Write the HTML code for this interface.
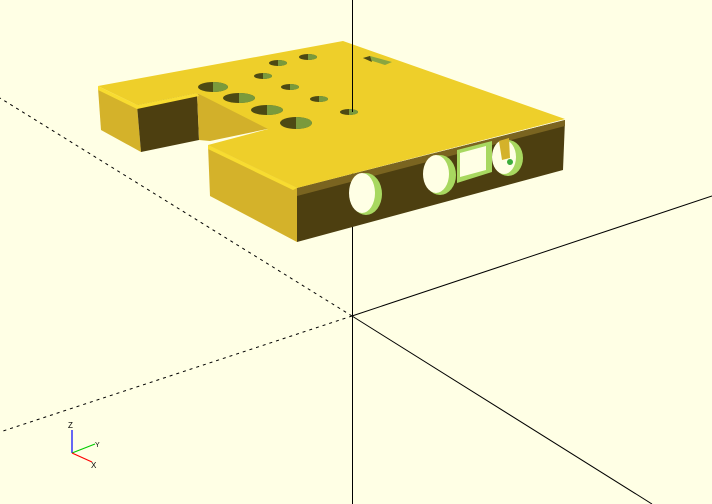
<!DOCTYPE html>
<html><head><meta charset="utf-8"><style>html,body{margin:0;padding:0;background:#ffffe5;overflow:hidden}svg{display:block}</style></head><body>
<svg width="712" height="504" viewBox="0 0 712 504" xmlns="http://www.w3.org/2000/svg">
<rect width="712" height="504" fill="#ffffe5"/>
<!-- axes -->
<line x1="352" y1="316" x2="0" y2="98" stroke="#000" stroke-width="1" stroke-dasharray="3,4"/>
<line x1="352" y1="316" x2="0" y2="432" stroke="#000" stroke-width="1" stroke-dasharray="3,4"/>
<line x1="352" y1="316" x2="712" y2="196" stroke="#000" stroke-width="1"/>
<line x1="352" y1="316" x2="652" y2="504" stroke="#000" stroke-width="1"/>
<line x1="352.5" y1="0" x2="352.5" y2="504" stroke="#000" stroke-width="1"/>
<!-- object -->
<polygon points="98,88 137,105 141,152 101,130" fill="#d4b22a"/>
<polygon points="137,105 197,93 199,140 141,152" fill="#4d3f10"/>
<polygon points="197,93 272,128 210,141 199,140" fill="#d2b02a"/>
<polygon points="208,145 297,188 297,242 210,196" fill="#d4b22a"/>
<polygon points="297,188 565,120 563,170 297,242" fill="#4d3f10"/>
<polygon points="297,188 565,120 565,126 297,196" fill="#7a6420"/>
<polygon points="98,86 343,41 565,119 297,188 208,145 268,129 197,93 137,105" fill="#eecf2a"/>
<polygon points="98,86 137,105 197,93 199,96 137,109 98,90" fill="#f8dc30"/>
<polygon points="208,145 297,188 293,190 208,149" fill="#f8dc30"/>
<!-- top holes -->
<g>
<ellipse cx="213" cy="87" rx="15" ry="5" fill="#4d4a14"/><path d="M213,82 a15,5 0 0 1 0,10z" fill="#7a9a3c"/>
<ellipse cx="239" cy="98" rx="16" ry="5" fill="#4d4a14"/><path d="M239,93 a16,5 0 0 1 0,10z" fill="#7a9a3c"/>
<ellipse cx="267" cy="110" rx="16" ry="5" fill="#4d4a14"/><path d="M267,105 a16,5 0 0 1 0,10z" fill="#7a9a3c"/>
<ellipse cx="296" cy="123" rx="16" ry="6" fill="#4d4a14"/><path d="M296,117 a16,6 0 0 1 0,12z" fill="#7a9a3c"/>
<ellipse cx="263" cy="76" rx="9" ry="3" fill="#4d4a14"/><path d="M263,73 a9,3 0 0 1 0,6z" fill="#7a9a3c"/>
<ellipse cx="278" cy="63" rx="9" ry="3" fill="#4d4a14"/><path d="M278,60 a9,3 0 0 1 0,6z" fill="#7a9a3c"/>
<ellipse cx="308" cy="57" rx="9" ry="3" fill="#4d4a14"/><path d="M308,54 a9,3 0 0 1 0,6z" fill="#7a9a3c"/>
<ellipse cx="290" cy="87" rx="9" ry="3" fill="#4d4a14"/><path d="M290,84 a9,3 0 0 1 0,6z" fill="#7a9a3c"/>
<ellipse cx="319" cy="99" rx="9" ry="3" fill="#4d4a14"/><path d="M319,96 a9,3 0 0 1 0,6z" fill="#7a9a3c"/>
<ellipse cx="349" cy="112" rx="9" ry="3" fill="#4d4a14"/><path d="M349,109 a9,3 0 0 1 0,6z" fill="#7a9a3c"/>
<polygon points="363,58 370,56 392,62 385,65" fill="#8aa640"/><polygon points="363,58 370,56 372,62" fill="#4d4a14"/>
</g>
<!-- front holes -->
<ellipse cx="366" cy="194" rx="16" ry="21" fill="#a8d860"/><ellipse cx="362" cy="193" rx="13" ry="20" fill="#ffffe5"/>
<ellipse cx="440" cy="175" rx="16" ry="20" fill="#a8d860"/><ellipse cx="436" cy="174" rx="13" ry="19" fill="#ffffe5"/>
<ellipse cx="508" cy="158" rx="15" ry="18" fill="#a8d860"/><ellipse cx="504" cy="157" rx="12" ry="17" fill="#ffffe5"/>
<polygon points="499,141 509,138 510,158 502,160" fill="#d4b22a"/><circle cx="510" cy="162" r="3" fill="#3cae3c"/>
<polygon points="457,150 492,141 492,172 457,183" fill="#a8d860"/>
<polygon points="460,153 486,146 486,170 460,177" fill="#ffffe5"/>
<!-- vertical line over top face -->
<line x1="352.5" y1="0" x2="352.5" y2="112" stroke="#000" stroke-width="1"/>
<!-- mini axes -->
<line x1="72" y1="453" x2="72" y2="430" stroke="#0000ff" stroke-width="1.2"/>
<line x1="72" y1="453" x2="95" y2="444" stroke="#00cc00" stroke-width="1.2"/>
<line x1="72" y1="453" x2="92" y2="462" stroke="#ff0000" stroke-width="1.2"/>
<text x="68" y="428" font-family="Liberation Sans, sans-serif" font-size="8" fill="#000">Z</text>
<text x="95" y="447" font-family="Liberation Sans, sans-serif" font-size="7" fill="#000">Y</text>
<text x="91" y="468" font-family="Liberation Sans, sans-serif" font-size="8" fill="#000">X</text>
</svg>
</body></html>
